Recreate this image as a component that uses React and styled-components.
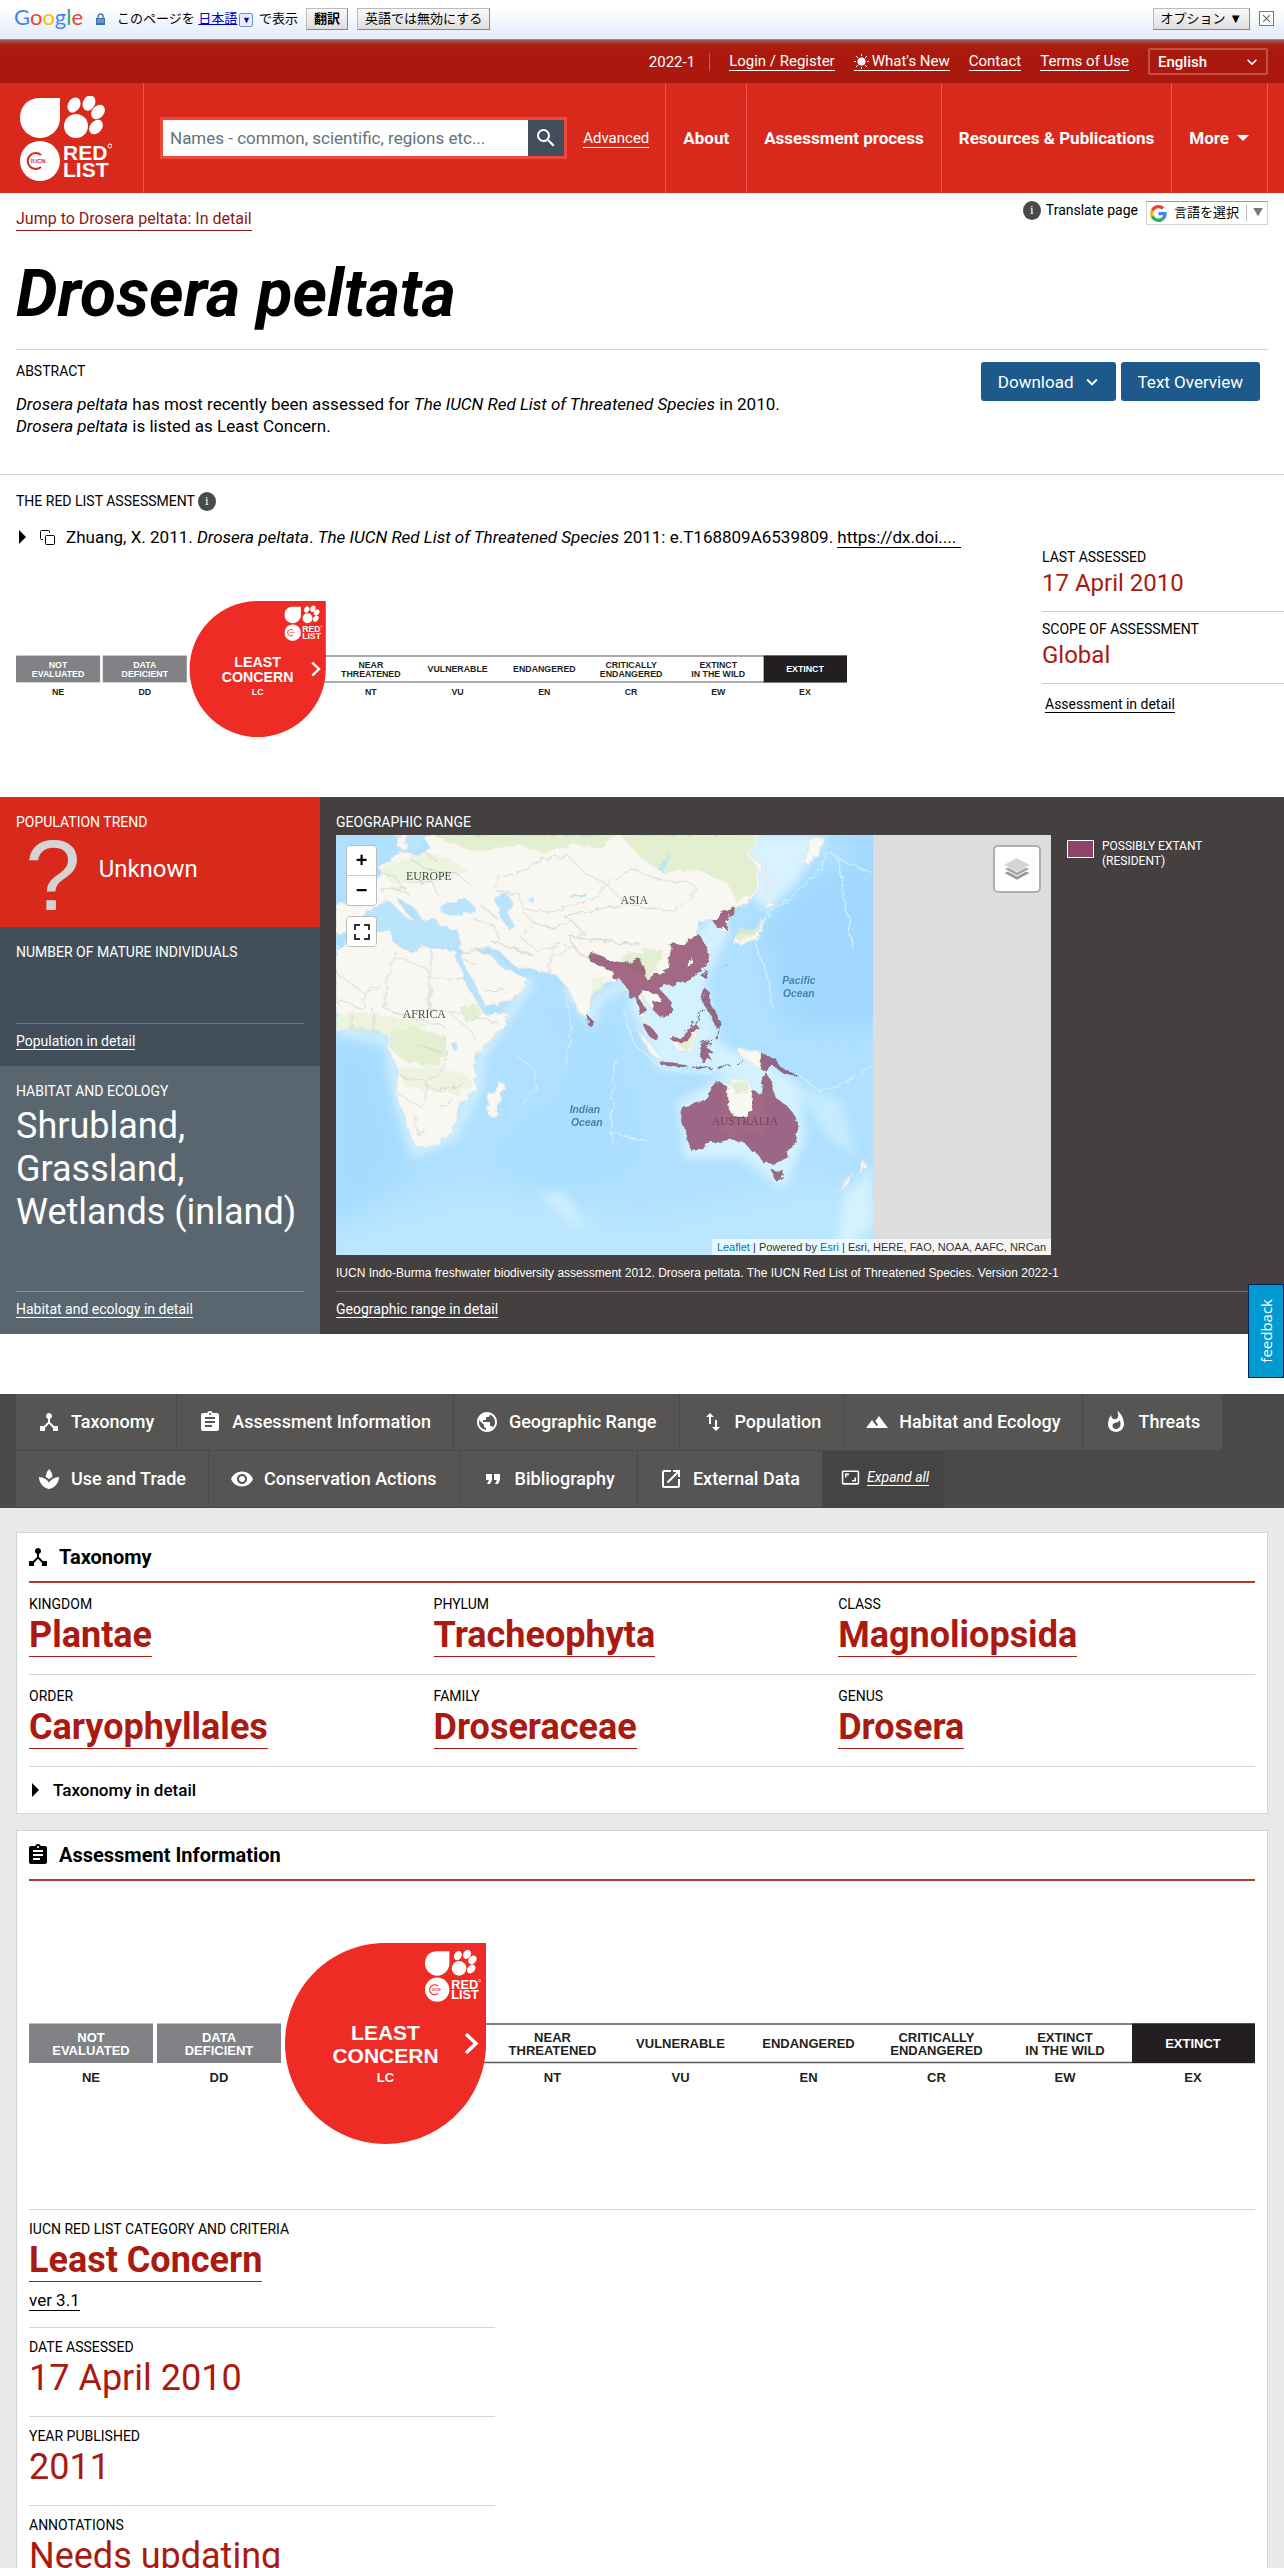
import React, { useState } from "react";
import styled, { createGlobalStyle } from "styled-components";
import {
  MdAspectRatio,
  MdAssignment,
  MdClose,
  MdDeviceHub,
  MdFormatQuote,
  MdKeyboardArrowDown,
  MdLandscape,
  MdLaunch,
  MdPublic,
  MdRemoveRedEye,
  MdSearch,
  MdSpa,
  MdSwapVert,
  MdWhatshot,
} from "react-icons/md";

const tabs = [
  { label: "Taxonomy", icon: MdDeviceHub },
  { label: "Assessment Information", icon: MdAssignment },
  { label: "Geographic Range", icon: MdPublic },
  { label: "Population", icon: MdSwapVert },
  { label: "Habitat and Ecology", icon: MdLandscape },
  { label: "Threats", icon: MdWhatshot },
  { label: "Use and Trade", icon: MdSpa },
  { label: "Conservation Actions", icon: MdRemoveRedEye },
  { label: "Bibliography", icon: MdFormatQuote },
  { label: "External Data", icon: MdLaunch },
];

const taxonomy = [
  ["Kingdom", "Plantae"],
  ["Phylum", "Tracheophyta"],
  ["Class", "Magnoliopsida"],
  ["Order", "Caryophyllales"],
  ["Family", "Droseraceae"],
  ["Genus", "Drosera"],
];

const categories = [
  { code: "NE", lines: ["NOT", "EVALUATED"], x: 124, color: "#fff" },
  { code: "DD", lines: ["DATA", "DEFICIENT"], x: 380, color: "#fff" },
  { code: "NT", lines: ["NEAR", "THREATENED"], x: 1047 },
  { code: "VU", lines: ["VULNERABLE"], x: 1303 },
  { code: "EN", lines: ["ENDANGERED"], x: 1559 },
  { code: "CR", lines: ["CRITICALLY", "ENDANGERED"], x: 1815 },
  { code: "EW", lines: ["EXTINCT", "IN THE WILD"], x: 2072 },
  { code: "EX", lines: ["EXTINCT"], x: 2328, color: "#fff" },
];

const LogoArt = ({ red }) => (
  <>
    <g fill="#fff">
      <path d="M0 22C0 10 8 2 20 2H40V22C40 33 31 42 20 42S0 33 0 22Z" />
      <ellipse cx="56" cy="30" rx="12" ry="12" />
      <ellipse cx="54" cy="9" rx="6" ry="8" transform="rotate(30 54 9)" />
      <ellipse cx="69" cy="7" rx="6" ry="8" transform="rotate(25 69 7)" />
      <ellipse cx="78" cy="16" rx="6" ry="8" transform="rotate(40 78 16)" />
      <ellipse cx="76" cy="31" rx="6" ry="8" transform="rotate(40 76 31)" />
      <circle cx="20" cy="65" r="20" />
      <g fontFamily="Liberation Sans, Arial, sans-serif" fontWeight="700" fontSize="21">
        <text x="43" y="64">RED</text>
        <text x="43" y="81">LIST</text>
      </g>
      <circle cx="90" cy="50" r="2" fill="none" stroke="#fff" />
    </g>
    <path d="M21 59A8 8 0 1 0 21 71" fill="none" stroke={red} strokeWidth="2" />
    <text
      x="11"
      y="67"
      fill={red}
      fontSize="6"
      fontWeight="700"
      fontFamily="Liberation Sans, Arial, sans-serif"
    >
      IUCN
    </text>
  </>
);

const CategoryScale = () => (
  <Scale viewBox="0 0 2452 402" role="img" aria-label="Red List category: Least Concern">
    <rect x="0" y="161" width="248" height="79" fill="#808285" />
    <rect x="256" y="161" width="248" height="79" fill="#808285" />
    <path d="M880 162H2450V239H880Z" fill="#fff" stroke="#58595b" strokeWidth="3" />
    <rect x="2206" y="161" width="246" height="79" fill="#231f20" />
    <path
      d="M512 201C512 90 602 0 713 0H914V201C914 312 824 402 713 402S512 312 512 201Z"
      fill="#ee2b24"
    />
    <path d="M874 182L894 201L874 220" fill="none" stroke="#fff" strokeWidth="7" />
    <svg x="792" y="12" width="112" height="108" viewBox="0 0 92 85">
      <LogoArt red="#ee2b24" />
    </svg>
    <g
      fontFamily="Liberation Sans, Arial, sans-serif"
      fontWeight="700"
      fontSize="26"
      textAnchor="middle"
      fill="#231f20"
    >
      {categories.map(({ code, lines, x, color }) => (
        <g key={code}>
          {lines.map((line, i) => (
            <text key={line} x={x} y={lines.length === 1 ? 210 : 197 + i * 26} fill={color}>
              {line}
            </text>
          ))}
          <text x={x} y="277">{code}</text>
        </g>
      ))}
      <g fill="#fff">
        <text x="713" y="194" fontSize="42">LEAST</text>
        <text x="713" y="239" fontSize="42">CONCERN</text>
        <text x="713" y="278">LC</text>
      </g>
    </g>
  </Scale>
);

const WorldMap = () => (
  <MapArt viewBox="45 154 1503 1176" role="img" aria-label="Range of Drosera peltata">
    <defs>
      <filter id="rough" x="-5%" y="-5%" width="110%" height="110%">
        <feTurbulence type="fractalNoise" baseFrequency="0.04" numOctaves="4" seed="3" />
        <feDisplacementMap in="SourceGraphic" scale="22" />
      </filter>
      <filter id="soft" x="-20%" y="-20%" width="140%" height="140%">
        <feGaussianBlur stdDeviation="14" />
      </filter>
      <filter id="softer" x="-20%" y="-20%" width="140%" height="140%">
        <feGaussianBlur stdDeviation="36" />
      </filter>
    </defs>
    <rect x="45" y="154" width="1503" height="1176" fill="#afe0ff" />
    <g filter="url(#softer)">
      <path d="M20 700L190 780L200 900L260 1060L130 1200L20 1240Z" fill="#a5dbff" />
      <path d="M560 620L700 700L700 900L560 960L480 1100L700 1160L900 1050L800 650Z" fill="#abdeff" />
      <path d="M1230 400L1400 250L1600 200V700L1300 690Z" fill="#a2d8ff" />
      <path d="M0 1260L420 1130L900 1220L1400 1110L1600 1200V1400H0Z" fill="#bae6ff" />
      <path d="M1440 100H1600V400Z" fill="#a4d9ff" />
    </g>
    <g filter="url(#soft)">
      <path d="M1190 154H1420L1330 290L1250 370L1190 300Z" fill="#d8f2ff" />
      <path
        d="M860 620L1100 380L1150 420L1080 560L1120 740L1250 790L1340 850L1360 1000L1300 1150L1180 1060L1020 1060L1000 900L1150 820L950 810Z"
        fill="#d4f1ff"
      />
      <path d="M1440 1330L1470 1160L1548 1080V1250Z" fill="#d4f1ff" />
      <path d="M610 1160L680 1150L750 1260L700 1240Z" fill="#cdeeff" />
      <path d="M1330 850L1460 900L1500 1050L1420 1000Z" fill="#c6ebff" />
    </g>
    <g fill="none" stroke="#d9f2ff" filter="url(#soft)" opacity="0.9">
      <path d="M45 702L190 725L218 880L265 1040L370 1000L440 860L450 770L540 640L590 560" strokeWidth="26" />
      <path d="M690 580L760 670L780 610L860 570" strokeWidth="26" />
    </g>
    <g fill="none" stroke="#cbedff" strokeWidth="4" filter="url(#rough)">
      <path d="M545 770L600 810L605 860L570 905" />
      <path d="M690 600L705 700L685 800" />
      <path d="M1420 190L1400 250L1330 320L1240 390L1220 460L1250 540L1270 640" />
      <path d="M1430 205L1480 235L1548 260M1450 220L1470 340L1490 470" />
      <path d="M850 640L880 740L960 810L1180 830" />
      <path d="M815 1020L825 780M810 990L920 1010" />
      <path d="M1330 820L1400 870L1470 850L1548 800M1400 870L1450 1010" />
    </g>

    <g filter="url(#rough)">
      <g fill="#f8f7f2" stroke="#d5dfe0" strokeWidth="2">
        <path d="M45 475L90 435L150 425L198 420L202 450L240 475L272 480L290 465L380 478L405 560L440 620L462 655L528 655L510 695L470 735L436 775L432 805L438 862L395 905L390 940L365 985L330 1018L290 1032L265 1025L240 960L213 880L218 810L190 755L190 715L150 698L100 695L45 702Z" />
        <path d="M390 485L430 475L480 490L505 520L540 535L585 560L560 598L500 628L462 636L440 605L415 550Z" />
        <path d="M165 240L205 222L225 196L265 210L310 190L285 154H1240L1200 205L1238 240L1230 300L1200 345L1160 358L1140 400L1147 428L1120 420L1100 390L1065 395L1055 430L1090 480L1080 520L1050 550L1000 570L955 578L985 630L955 670L928 640L905 605L905 650L912 680L940 715L945 732L918 708L898 655L890 612L865 605L845 560L805 565L762 600L748 666L722 648L695 585L660 545L590 530L545 522L500 478L470 470L430 475L395 480L385 420L335 410L320 385L290 400L265 360L215 330L240 370L268 395L240 385L190 335L130 370L130 430L45 430V350L110 340L120 290L170 265Z" />
        <path d="M212 154H248L240 192L218 190Z" />
        <path d="M500 850L515 845L505 905L485 948L468 935L470 880Z" />
        <path d="M1245 370L1230 420L1165 440L1152 460L1215 452L1240 420Z" />
        <path d="M1355 230L1372 165L1410 154L1400 210L1368 238Z" />
        <path d="M1248 225L1258 290L1250 320ZM1255 340L1275 350L1250 365Z" />
        <path d="M880 690L930 745L965 790L925 765Z" />
        <path d="M985 735L1040 690L1060 685L1050 740L1035 765L1000 755Z" />
        <path d="M1170 750L1236 762V815L1205 790L1180 775Z" />
        <path d="M1125 850L1150 850L1165 838L1200 842L1215 875L1250 880V990H1120Z" />
        <path d="M1515 1050L1528 1080L1505 1100L1520 1060ZM1500 1100L1480 1130L1448 1155L1470 1125Z" />
      </g>
      <g fill="#deedc6" opacity="0.75">
        <path d="M195 705L260 690L350 720L352 770L330 800L240 790L195 750Z" />
        <path d="M45 655L110 650L180 660L270 670L300 690L190 712L45 698Z" opacity="0.6" />
        <path d="M220 810L300 800L400 820L430 850L380 880L240 860Z" opacity="0.5" />
        <path d="M390 640L440 625L450 655L410 680Z" />
        <path d="M310 154H840L780 190L700 180L620 205L560 180L430 200Z" />
        <path d="M840 154H1235L1195 205L1230 250L1220 310L1170 345L1140 290L1050 250L960 260L900 220Z" />
        <path d="M170 250L290 200L360 220L420 260L330 280L200 290Z" opacity="0.6" />
        <path d="M840 500L920 470L960 480L930 560L850 520Z" />
        <path d="M760 560L800 550L790 590L762 600Z" opacity="0.6" />
        <path d="M1160 430L1230 400L1230 425L1170 450Z" />
        <path d="M1000 740L1045 710L1045 745L1030 760Z" />
        <path d="M1150 850L1200 845L1200 870L1160 880Z" />
      </g>
      <g fill="#b9e4fb">
        <path d="M130 370L190 335L240 385L268 395L265 360L290 400L320 385L335 410L385 420L385 470L290 462L272 478L240 470L202 448L198 418L150 422L100 400Z" />
        <path d="M340 370L350 335L385 345L405 330L440 360L420 375L370 378Z" />
        <path d="M490 330L520 315L540 345L525 370L545 410L530 420L505 385Z" />
        <path d="M378 492L392 490L462 630L470 655L455 650Z" />
        <path d="M478 482L495 480L520 515L545 528L520 535Z" />
        <path d="M945 255L975 215L985 205L965 250ZM580 335L595 322L600 345ZM700 325L745 315V322L705 332Z" />
        <path d="M370 740L388 740L382 758L372 755Z" />
        <path d="M190 225L225 195L265 205L305 154H250L235 195L200 200Z" />
      </g>
      <g fill="none" stroke="#cfcac8" strokeWidth="2">
        <path d="M45 540L130 600L190 555L210 480M210 495L305 530V590L300 640M312 470V558H405M312 558L305 640L390 650" />
        <path d="M130 600L120 640L45 610M190 555L180 640L270 670L350 690M350 715L355 780L330 830L300 850L290 920L215 878M290 850L330 870L400 850M330 920L370 890M270 940V990L300 970M360 650L420 700L440 730" />
        <path d="M490 300L500 270L580 250L620 220L700 215L740 260L800 290L780 330L700 350L640 370L570 360L560 320L490 310" />
        <path d="M800 290L870 250L960 280L1040 290L1060 310L990 370L860 350L800 290M570 370L600 400L660 420M430 390L490 410L500 450M600 400L560 440L610 480L680 460L720 470" />
        <path d="M170 255L210 270L240 310M250 220L300 250L380 260L430 300M640 540L650 490L700 470M400 500L440 520M460 590L520 590" />
        <path d="M250 290L310 280L330 320M290 200L330 230M200 300L250 320M270 740L340 760M225 830L290 840M150 640L150 700M90 645V695M430 660L500 680" />
      </g>
      <g fill="none" stroke="#c6c1ae" strokeWidth="4" opacity="0.5">
        <path d="M655 420L700 390L740 430L700 450L730 490L840 520M680 380L740 370L850 350M700 440L900 460M450 350L500 390M480 450L600 490M170 310L240 300" />
      </g>
    </g>

    <g fontFamily="Liberation Serif, serif" fontSize="33" fill="#4c4c4c" textAnchor="middle">
      <text x="305" y="280">EUROPE</text>
      <text x="880" y="347">ASIA</text>
      <text x="292" y="667">AFRICA</text>
    </g>

    <g fill="#8d4468" fillOpacity="0.8" stroke="#7d6a78" strokeWidth="2" filter="url(#rough)">
      <path d="M752 492L765 484L825 512L850 515L895 500L905 520V545L918 562L945 545L980 530L975 500L985 458L1020 465L1030 445L1062 435L1085 475L1088 500L1065 540L1020 562L990 572L965 572L955 590L985 625V650L958 668L930 640L935 622L955 620L948 600L915 590L898 585L895 610L908 640L898 660L888 610L865 608L862 585L845 560L820 555L822 535L760 510ZM1030 500L1028 525L1040 520L1043 495Z" fillRule="evenodd" />
      <path d="M1100 392L1120 375L1158 355L1155 375L1135 395L1145 425L1130 410L1108 410Z" />
      <path d="M1070 550L1082 532L1080 555ZM1070 610L1078 585L1088 592L1086 618L1100 640L1118 665L1120 685L1105 690L1098 660L1080 640Z" />
      <path d="M750 660L764 675L764 690L752 688Z" />
      <path d="M905 682L922 688L942 712L942 728L925 720Z" />
      <path d="M985 728L1010 718L1035 695L1050 682L1060 695L1035 712L1030 730L995 735Z" />
      <path d="M1062 748L1078 738H1098L1080 748L1098 760L1085 765L1098 785L1082 775L1070 790Z" />
      <path d="M952 790L985 792L1025 797V806L990 802L955 797ZM1040 804L1100 808L1065 810ZM1110 803L1150 800L1120 806Z" />
      <path d="M1236 764L1275 780L1285 800L1320 820L1340 828L1300 822L1270 800L1250 815L1236 810Z" />
      <path d="M1018 915L1060 905L1088 890L1098 860L1125 850L1142 860V910L1150 935L1200 948L1212 910L1214 875L1238 880L1248 820L1262 840L1275 890L1310 915L1335 950V990L1310 1060L1280 1074L1240 1070L1225 1045L1210 1040L1190 1015L1150 1006L1100 1015L1070 1030L1038 1035L1030 1010L1016 950Z" />
      <path d="M1266 1092L1282 1100L1295 1092L1294 1118L1280 1126Z" />
    </g>
    <text
      x="1190"
      y="966"
      fontFamily="Liberation Serif, serif"
      fontSize="33"
      fill="#744561"
      textAnchor="middle"
    >
      AUSTRALIA
    </text>
    <g fill="none" stroke="#6f7f7c" strokeWidth="3" filter="url(#rough)">
      <path d="M1050 680L1075 640M1085 625L1110 650L1090 655M1115 690L1110 725L1070 738M1165 795L1185 785M1125 525L1138 515" />
    </g>
    <g
      fontFamily="Liberation Sans, Arial, sans-serif"
      fontSize="29"
      fontWeight="700"
      fontStyle="italic"
      fill="#4583ab"
      textAnchor="middle"
    >
      <text x="1341" y="571">Pacific</text>
      <text x="1341" y="608">Ocean</text>
      <text x="742" y="932">Indian</text>
      <text x="747" y="969">Ocean</text>
    </g>
  </MapArt>
);

const App = () => {
  const [query, setQuery] = useState("");

  return (
    <Page>
      <GlobalStyle />
      <TranslateBar>
        <GoogleWord>
          <Letter $c="#4285f4">G</Letter>
          <Letter $c="#ea4335">o</Letter>
          <Letter $c="#fbbc05">o</Letter>
          <Letter $c="#4285f4">g</Letter>
          <Letter $c="#34a853">l</Letter>
          <Letter $c="#ea4335">e</Letter>
        </GoogleWord>
        <svg width="9" height="12" viewBox="0 0 9 12" aria-hidden="true">
          <path d="M2 6V3.500A2.500 2.500 0 0 1 7 3.500V6" fill="none" stroke="#4a78b8" strokeWidth="1.500" />
          <path d="M0 5H9V12H0Z" fill="#3c6eb4" />
          <path d="M1 7H8M1 9H8" stroke="#9dbbe4" />
        </svg>
        <BarText>
          このページを <LanguageLink href="#lang">日本語</LanguageLink>
          <LanguageArrow aria-label="言語">▼</LanguageArrow> で表示
        </BarText>
        <BarButton $bold>翻訳</BarButton>
        <BarButton>英語では無効にする</BarButton>
        <Spacer />
        <BarButton>オプション ▼</BarButton>
        <CloseButton aria-label="Close">
          <MdClose size={13} />
        </CloseButton>
      </TranslateBar>

      <TopBar>
        <Version>2022-1</Version>
        <TopLink href="#login">Login / Register</TopLink>
        <TopLink href="#new">
          <svg width="15" height="15" viewBox="0 0 15 15" aria-hidden="true">
            <circle cx="7.500" cy="7.500" r="4" fill="#fff" />
            <path
              d="M7.500 0V2M7.500 13V15M0 7.500H2M13 7.500H15M2 2L4 4M11 11L13 13M2 13L4 11M11 4L13 2"
              stroke="#fff"
            />
          </svg>
          What&apos;s New
        </TopLink>
        <TopLink href="#contact">Contact</TopLink>
        <TopLink href="#terms">Terms of Use</TopLink>
        <SelectWrap>
          <LanguageSelect aria-label="Language" defaultValue="en">
            <option value="en">English</option>
            <option value="fr">Français</option>
            <option value="es">Español</option>
          </LanguageSelect>
          <MdKeyboardArrowDown size={20} />
        </SelectWrap>
      </TopBar>

      <Header>
        <LogoLink href="#home" aria-label="IUCN Red List">
          <svg width="92" height="85" viewBox="0 0 92 85">
            <LogoArt red="#d9291c" />
          </svg>
        </LogoLink>
        <SearchForm onSubmit={(e) => e.preventDefault()}>
          <SearchInput
            aria-label="Search"
            placeholder="Names - common, scientific, regions etc..."
            value={query}
            onChange={(e) => setQuery(e.target.value)}
          />
          <SearchButton aria-label="Search">
            <MdSearch size={24} />
          </SearchButton>
        </SearchForm>
        <Advanced>
          <Link href="#advanced">Advanced</Link>
        </Advanced>
        <Nav>
          <NavLink href="#about">About</NavLink>
          <NavLink href="#process">Assessment process</NavLink>
          <NavLink href="#resources">Resources &amp; Publications</NavLink>
          <NavButton>
            More
            <svg width="12" height="6" viewBox="0 0 12 6" aria-hidden="true">
              <path d="M0 0H12L6 6Z" fill="#fff" />
            </svg>
          </NavButton>
        </Nav>
      </Header>

      <Intro>
        <IntroTop>
          <JumpLink href="#detail">Jump to Drosera peltata: In detail</JumpLink>
          <TranslateBox>
            <Info>i</Info>
            Translate page
            <Translator>
              <svg width="17" height="17" viewBox="0 0 48 48" aria-hidden="true">
                <path fill="#ea4335" d="M24 9.500c3.500 0 6.700 1.200 9.200 3.600l6.900-6.900C35.900 2.400 30.500 0 24 0 14.600 0 6.500 5.400 2.600 13.200l8 6.200C12.400 13.700 17.700 9.500 24 9.500z" />
                <path fill="#4285f4" d="M47 24.500c0-1.600-.2-3.100-.4-4.500H24v9h12.900c-.6 3-2.300 5.500-4.800 7.200l7.700 6C44.400 38 47 32 47 24.500z" />
                <path fill="#fbbc05" d="M10.500 28.600c-.5-1.500-.8-3-.8-4.600s.3-3.100.8-4.600l-8-6.200C1 16.500 0 20.100 0 24s.9 7.500 2.600 10.800l7.900-6.200z" />
                <path fill="#34a853" d="M24 48c6.500 0 11.900-2.100 15.900-5.800l-7.700-6c-2.200 1.500-4.900 2.300-8.200 2.300-6.300 0-11.600-4.200-13.500-9.900l-8 6.200C6.500 42.600 14.600 48 24 48z" />
              </svg>
              <span>言語を選択</span>
              <TranslatorArrow>▼</TranslatorArrow>
            </Translator>
          </TranslateBox>
        </IntroTop>
        <Title>Drosera peltata</Title>
        <Abstract>
          <div>
            <Label>Abstract</Label>
            <Summary>
              <em>Drosera peltata</em> has most recently been assessed for{" "}
              <em>The IUCN Red List of Threatened Species</em> in 2010.
              <br />
              <em>Drosera peltata</em> is listed as Least Concern.
            </Summary>
          </div>
          <Actions>
            <ActionButton>
              Download <MdKeyboardArrowDown size={22} />
            </ActionButton>
            <ActionButton>Text Overview</ActionButton>
          </Actions>
        </Abstract>
      </Intro>

      <Assessment>
        <AssessmentMain>
          <LabelRow>
            <Label>The Red List Assessment</Label>
            <Info>i</Info>
          </LabelRow>
          <Citation>
            <Triangle />
            <svg width="15" height="15" viewBox="0 0 15 15" fill="none" stroke="#000" aria-hidden="true">
              <rect x="5.500" y="5.500" width="9" height="9" rx="1" />
              <path d="M3 9.500H1.500A1 1 0 0 1 .5 8.500V1.500A1 1 0 0 1 1.500 .5H8.500A1 1 0 0 1 9.500 1.500V3" />
            </svg>
            <CitationText>
              Zhuang, X. 2011. <em>Drosera peltata</em>. <em>The IUCN Red List of Threatened Species</em>{" "}
              2011: e.T168809A6539809. <Link href="#doi">https://dx.doi....&nbsp;</Link>
            </CitationText>
          </Citation>
          <SmallScale>
            <CategoryScale />
          </SmallScale>
        </AssessmentMain>
        <Facts>
          <Fact>
            <Label>Last assessed</Label>
            <FactValue>17 April 2010</FactValue>
          </Fact>
          <Fact>
            <Label>Scope of assessment</Label>
            <FactValue>Global</FactValue>
          </Fact>
          <FactLink>
            <Link href="#assessment">Assessment in detail</Link>
          </FactLink>
        </Facts>
      </Assessment>

      <Overview>
        <OverviewSide>
          <Panel $bg="#d9291c" $height={130}>
            <Label>Population trend</Label>
            <Trend>
              <QuestionMark>?</QuestionMark>
              <TrendText>Unknown</TrendText>
            </Trend>
          </Panel>
          <Panel $bg="#424f5a" $height={139}>
            <Label>Number of mature individuals</Label>
            <PanelFoot>
              <Link href="#population">Population in detail</Link>
            </PanelFoot>
          </Panel>
          <Panel $bg="#5a666f" $height={268}>
            <Label>Habitat and ecology</Label>
            <Habitats>Shrubland, Grassland, Wetlands (inland)</Habitats>
            <PanelFoot>
              <Link href="#habitat">Habitat and ecology in detail</Link>
            </PanelFoot>
          </Panel>
        </OverviewSide>
        <Range>
          <Label>Geographic range</Label>
          <RangeBody>
            <MapBox>
              <WorldMap />
              <MapControls>
                <ZoomButtons>
                  <MapButton aria-label="Zoom in">+</MapButton>
                  <MapButton aria-label="Zoom out">−</MapButton>
                </ZoomButtons>
                <ZoomButtons>
                  <MapButton aria-label="Full screen">
                    <svg width="16" height="16" viewBox="0 0 16 16" fill="none" stroke="#333" strokeWidth="2">
                      <path d="M1 6V1H6M10 1H15V6M15 10V15H10M6 15H1V10" />
                    </svg>
                  </MapButton>
                </ZoomButtons>
              </MapControls>
              <LayersButton aria-label="Layers">
                <svg width="28" height="28" viewBox="0 0 28 28" aria-hidden="true">
                  <path d="M1 18L14 25L27 18L14 12Z" fill="#9a9a9a" stroke="#fff" strokeWidth="0.500" />
                  <path d="M1 14L14 21L27 14L14 8Z" fill="#a6a6a6" stroke="#fff" />
                  <path d="M1 10L14 17L27 10L14 3Z" fill="#d4d4d4" stroke="#eee" />
                </svg>
              </LayersButton>
              <Attribution>
                <MapLink href="#leaflet">Leaflet</MapLink> | Powered by <MapLink href="#esri">Esri</MapLink> |
                Esri, HERE, FAO, NOAA, AAFC, NRCan
              </Attribution>
            </MapBox>
            <Legend>
              <Swatch />
              <span>POSSIBLY EXTANT (RESIDENT)</span>
            </Legend>
          </RangeBody>
          <Caption>
            IUCN Indo-Burma freshwater biodiversity assessment 2012. Drosera peltata. The IUCN Red List of
            Threatened Species. Version 2022-1
          </Caption>
          <PanelFoot>
            <Link href="#range">Geographic range in detail</Link>
          </PanelFoot>
        </Range>
      </Overview>

      <TabBar>
        {tabs.map(({ label, icon: Icon }) => (
          <Tab key={label} href={"#" + label}>
            <Icon size={24} />
            {label}
          </Tab>
        ))}
        <ExpandButton>
          <MdAspectRatio size={19} />
          <ExpandText>Expand all</ExpandText>
        </ExpandButton>
      </TabBar>

      <Details>
        <Card>
          <CardTitle>
            <MdDeviceHub size={24} />
            Taxonomy
          </CardTitle>
          <TaxonGrid>
            {taxonomy.map(([rank, name]) => (
              <Taxon key={rank}>
                <Label>{rank}</Label>
                <BigValue $bold>
                  <Link href={"#" + name}>{name}</Link>
                </BigValue>
              </Taxon>
            ))}
          </TaxonGrid>
          <Disclosure>
            <Triangle />
            Taxonomy in detail
          </Disclosure>
        </Card>
        <Card>
          <CardTitle>
            <MdAssignment size={24} />
            Assessment Information
          </CardTitle>
          <LargeScale>
            <CategoryScale />
          </LargeScale>
          <Fields>
            <Field>
              <Label>IUCN Red List Category and Criteria</Label>
              <BigValue $bold>
                <Link href="#lc">Least Concern</Link>
              </BigValue>
              <Criteria>
                <Link href="#criteria">ver 3.1</Link>
              </Criteria>
            </Field>
            <Field>
              <Label>Date assessed</Label>
              <BigValue>17 April 2010</BigValue>
            </Field>
            <Field>
              <Label>Year published</Label>
              <BigValue>2011</BigValue>
            </Field>
            <Field>
              <Label>Annotations</Label>
              <BigValue>Needs updating</BigValue>
            </Field>
          </Fields>
        </Card>
      </Details>

      <Feedback>feedback</Feedback>
    </Page>
  );
};

const GlobalStyle = createGlobalStyle`
  * {
    box-sizing: border-box;
  }
  body {
    margin: 0;
    background: #fff;
    color: #000;
    font-family: Roboto, "Noto Sans CJK JP", sans-serif;
    font-size: 17px;
    line-height: 22px;
  }
  button,
  input,
  select {
    font-family: inherit;
  }
  button {
    cursor: pointer;
  }
  svg {
    flex-shrink: 0;
  }
`;

const Page = styled.div`
  height: 100vh;
  overflow: hidden;
`;

const Spacer = styled.div`
  flex: 1;
`;

const Link = styled.a`
  color: inherit;
  text-decoration: none;
  border-bottom: 1px solid currentColor;
`;

const Label = styled.div`
  font-size: 14px;
  line-height: 18px;
  text-transform: uppercase;
`;

const TranslateBar = styled.div`
  display: flex;
  align-items: center;
  height: 40px;
  padding: 0 10px 2px 14px;
  border-bottom: 1px solid #6b90da;
  background: linear-gradient(#fff 20%, #e0ecfa);
  font-family: "Liberation Sans", "Noto Sans CJK JP", sans-serif;
  font-size: 13px;
  line-height: 18px;
`;

const GoogleWord = styled.span`
  width: 82px;
  padding-bottom: 3px;
  font-family: Lato, sans-serif;
  font-size: 22px;
  line-height: 24px;
`;

const Letter = styled.span`
  color: ${(props) => props.$c};
`;

const BarText = styled.span`
  margin: 0 8px 0 12px;
`;

const LanguageLink = styled.a`
  color: #0000cc;
`;

const LanguageArrow = styled.button`
  width: 14px;
  height: 14px;
  margin: 0 2px;
  padding: 0;
  border: 1px solid #6b90da;
  border-radius: 2px;
  background: #e8f0fc;
  color: #0000cc;
  font-size: 9px;
  line-height: 12px;
`;

const BarButton = styled.button`
  height: 22px;
  margin-right: 9px;
  padding: 0 7px;
  border: 1px solid #bbb;
  border-right-color: #888;
  border-bottom-color: #888;
  background: linear-gradient(#fafafa, #ddd);
  font-size: 13px;
  line-height: 18px;
  font-weight: ${(props) => (props.$bold ? 700 : 400)};
`;

const CloseButton = styled.button`
  display: flex;
  align-items: center;
  justify-content: center;
  width: 15px;
  height: 15px;
  padding: 0;
  border: 1px solid #777;
  background: #fff;
  color: #666;
`;

const TopBar = styled.div`
  display: flex;
  align-items: center;
  justify-content: flex-end;
  gap: 19px;
  height: 43px;
  padding: 0 16px;
  background: linear-gradient(#9d5a55, #a91f14 5px, #ab190e 12px);
  color: #fff;
  font-size: 15px;
  line-height: 18px;
`;

const Version = styled.span`
  padding-right: 14px;
  border-right: 1px solid #c75b53;
`;

const TopLink = styled.a`
  display: flex;
  align-items: center;
  gap: 3px;
  border-bottom: 1px solid #fff;
  color: #fff;
  text-decoration: none;
`;

const SelectWrap = styled.div`
  display: flex;
  align-items: center;
  border: 2px solid #c5504a;
  border-radius: 2px;

  svg {
    margin: 0 4px 0 -24px;
    pointer-events: none;
  }
`;

const LanguageSelect = styled.select`
  width: 116px;
  height: 23px;
  padding: 0 8px;
  border: 0;
  appearance: none;
  background: transparent;
  color: #fff;
  font-size: 15px;
  font-weight: 500;
`;

const Header = styled.header`
  display: flex;
  align-items: center;
  height: 110px;
  padding-right: 16px;
  background: #d9291c;
  color: #fff;
`;

const LogoLink = styled.a`
  display: flex;
  align-items: center;
  height: 100%;
  padding: 0 31px 0 20px;
  border-right: 1px solid #f0534a;
`;

const SearchForm = styled.form`
  display: flex;
  flex: 1;
  height: 42px;
  margin: 0 16px;
  border: 3px solid #f0483b;
`;

const SearchInput = styled.input`
  flex: 1;
  min-width: 0;
  padding: 0 7px;
  border: 0;
  outline: none;
  font-size: 17px;

  &::placeholder {
    color: #66717a;
  }
`;

const SearchButton = styled.button`
  display: flex;
  align-items: center;
  justify-content: center;
  width: 36px;
  padding: 0;
  border: 0;
  background: #424f5a;
  color: #fff;
`;

const Advanced = styled.span`
  margin-right: 16px;
  font-size: 15px;
`;

const Nav = styled.nav`
  display: flex;
  height: 100%;
  border-right: 1px solid #f0534a;
`;

const NavLink = styled.a`
  display: flex;
  align-items: center;
  padding: 0 17px;
  border-left: 1px solid #f0534a;
  color: #fff;
  font-size: 17px;
  font-weight: 700;
  text-decoration: none;
`;

const NavButton = styled.button`
  display: flex;
  align-items: center;
  gap: 8px;
  padding: 0 18px 0 17px;
  border: 0;
  border-left: 1px solid #f0534a;
  background: none;
  color: #fff;
  font-size: 17px;
  font-weight: 700;
`;

const Intro = styled.section`
  padding: 8px 16px 0;
  border-bottom: 1px solid #d4d4d4;
`;

const IntroTop = styled.div`
  display: flex;
  align-items: flex-start;
  justify-content: space-between;
  height: 34px;
`;

const JumpLink = styled(Link)`
  margin-top: 7px;
  color: #8b1a12;
  font-size: 16px;
  line-height: 22px;
`;

const TranslateBox = styled.div`
  display: flex;
  gap: 5px;
  font-size: 14px;
  line-height: 19px;
`;

const Info = styled.span`
  width: 18px;
  height: 19px;
  border-radius: 50%;
  background: #4a4a4a;
  color: #fff;
  font-family: "Liberation Serif", serif;
  font-size: 13px;
  line-height: 18px;
  text-align: center;
`;

const Translator = styled.button`
  display: flex;
  align-items: center;
  gap: 7px;
  height: 24px;
  margin-left: 3px;
  padding: 0 4px 0 3px;
  border: 1px solid #d5d5d5;
  border-top-color: #9b9b9b;
  background: #fff;
  font-size: 13px;
  line-height: 18px;
  white-space: nowrap;
`;

const TranslatorArrow = styled.span`
  padding-left: 6px;
  border-left: 1px solid #bbb;
  color: #767676;
  font-size: 10px;
  line-height: 16px;
`;

const Title = styled.h1`
  margin: 21px 0 17px;
  font-size: 66px;
  font-style: italic;
  font-weight: 700;
  line-height: 76px;
`;

const Abstract = styled.div`
  display: flex;
  justify-content: space-between;
  padding: 12px 8px 37px 0;
  border-top: 1px solid #d4d4d4;
`;

const Summary = styled.p`
  margin: 13px 0 0;
`;

const Actions = styled.div`
  display: flex;
  align-items: flex-start;
  gap: 5px;
`;

const ActionButton = styled.button`
  display: flex;
  align-items: center;
  gap: 7px;
  height: 39px;
  padding: 0 17px;
  border: 0;
  border-radius: 3px;
  background: #1d5a8b;
  color: #fff;
  font-size: 17px;

  svg {
    margin-right: -4px;
  }
`;

const Assessment = styled.section`
  display: grid;
  grid-template-columns: minmax(0, 1fr) 242px;
`;

const AssessmentMain = styled.div`
  padding: 16px 0 60px 16px;
`;

const LabelRow = styled.div`
  display: flex;
  align-items: center;
  gap: 3px;
  height: 20px;
`;

const Citation = styled.div`
  display: flex;
  align-items: center;
  margin-top: 15px;
`;

const Triangle = styled.span`
  width: 0;
  margin: 0 14px 0 3px;
  border: 7px solid transparent;
  border-right-width: 0;
  border-left-color: #000;
`;

const CitationText = styled.span`
  margin-left: 11px;
`;

const Scale = styled.svg`
  display: block;
  width: 100%;
`;

const SmallScale = styled.div`
  width: 81%;
  margin-top: 53px;
`;

const Facts = styled.div`
  padding-top: 73px;
`;

const Fact = styled.div`
  margin-bottom: 8px;
  padding-bottom: 13px;
  border-bottom: 1px solid #ccc;
`;

const FactValue = styled.div`
  margin-top: 3px;
  color: #ab1a10;
  font-size: 24px;
  line-height: 29px;
`;

const FactLink = styled.div`
  padding: 3px;
  font-size: 14px;
  line-height: 18px;
`;

const Overview = styled.section`
  display: grid;
  grid-template-columns: 320px minmax(0, 1fr);
  background: #454040;
  color: #fff;
`;

const OverviewSide = styled.div`
  display: flex;
  flex-direction: column;
`;

const Panel = styled.div`
  display: flex;
  flex-direction: column;
  min-height: ${(props) => props.$height}px;
  padding: 16px;
  background: ${(props) => props.$bg};
`;

const PanelFoot = styled.div`
  margin-top: auto;
  padding-top: 8px;
  border-top: 1px solid rgba(255, 255, 255, 0.25);
  font-size: 14px;
  line-height: 18px;
`;

const Trend = styled.div`
  display: flex;
  align-items: flex-start;
  gap: 18px;
  height: 80px;
  padding-left: 9px;
`;

const QuestionMark = styled.span`
  color: #d4d4d4;
  font-family: "Liberation Sans", Arial, sans-serif;
  font-size: 100px;
  line-height: 88px;
`;

const TrendText = styled.span`
  font-size: 24px;
  line-height: 76px;
`;

const Habitats = styled.div`
  margin-top: 5px;
  font-size: 36px;
  line-height: 43px;
`;

const Range = styled.div`
  display: flex;
  flex-direction: column;
  padding: 16px;
`;

const RangeBody = styled.div`
  display: grid;
  grid-template-columns: minmax(0, 1fr) 201px;
  gap: 16px;
  margin-top: 4px;
`;

const MapBox = styled.div`
  position: relative;
  height: 420px;
  overflow: hidden;
  background: #ddd;
`;

const MapArt = styled.svg`
  display: block;
  height: 100%;
`;

const MapControls = styled.div`
  position: absolute;
  top: 10px;
  left: 10px;
  display: grid;
  gap: 10px;
`;

const ZoomButtons = styled.div`
  display: grid;
  gap: 1px;
  overflow: hidden;
  border: 1px solid #bbb;
  border-radius: 4px;
  background: #ccc;
`;

const MapButton = styled.button`
  display: flex;
  align-items: center;
  justify-content: center;
  width: 29px;
  height: 29px;
  padding: 0;
  border: 0;
  background: #fff;
  color: #000;
  font-family: "Liberation Sans", Arial, sans-serif;
  font-size: 20px;
  font-weight: 700;
`;

const LayersButton = styled.button`
  position: absolute;
  top: 10px;
  right: 10px;
  display: flex;
  align-items: center;
  justify-content: center;
  width: 48px;
  height: 48px;
  padding: 0;
  border: 2px solid #b0b0b0;
  border-radius: 5px;
  background: #fff;
`;

const Attribution = styled.div`
  position: absolute;
  right: 0;
  bottom: 0;
  padding: 0 5px;
  background: rgba(255, 255, 255, 0.7);
  color: #333;
  font-family: "Liberation Sans", Arial, sans-serif;
  font-size: 11px;
  line-height: 16px;
  white-space: nowrap;
`;

const MapLink = styled.a`
  color: #0078a8;
  text-decoration: none;
`;

const Legend = styled.div`
  display: flex;
  gap: 8px;
  padding: 4px 30px 0 0;
  font-size: 12px;
  line-height: 15px;
`;

const Swatch = styled.span`
  flex: none;
  width: 27px;
  height: 18px;
  margin-top: 1px;
  border: 1px solid #fff;
  background: #8d4468;
`;

const Caption = styled.p`
  margin: 9px 0;
  font-family: "Liberation Sans", Arial, sans-serif;
  font-size: 12px;
  line-height: 18px;
`;

const TabBar = styled.nav`
  display: flex;
  flex-wrap: wrap;
  margin-top: 60px;
  padding: 0 16px;
  background: #4b4a48;
  color: #fff;
`;

const Tab = styled.a`
  display: flex;
  align-items: center;
  gap: 10px;
  height: 57px;
  padding: 0 22px 0 21px;
  border-right: 1px solid #4b4a48;
  border-bottom: 1px solid #4b4a48;
  background: #565553;
  color: #fff;
  font-size: 18px;
  font-weight: 500;
  text-decoration: none;
`;

const ExpandButton = styled.button`
  display: flex;
  align-items: center;
  gap: 7px;
  height: 57px;
  padding: 0 15px 4px 18px;
  border: 0;
  background: #454442;
  color: #fff;
  font-size: 14px;
`;

const ExpandText = styled.em`
  border-bottom: 1px solid #fff;
`;

const Details = styled.main`
  display: grid;
  gap: 16px;
  padding: 24px 16px;
  background: #e9e9e9;
`;

const Card = styled.section`
  padding: 0 12px;
  border: 1px solid #d4d4d4;
  background: #fff;
`;

const CardTitle = styled.h2`
  display: flex;
  align-items: center;
  gap: 9px;
  height: 50px;
  margin: 0;
  border-bottom: 2px solid #b23830;
  font-size: 20px;
  font-weight: 700;

  svg {
    margin-left: -3px;
  }
`;

const TaxonGrid = styled.div`
  display: grid;
  grid-template-columns: 33% 33% 34%;
`;

const Taxon = styled.div`
  padding: 12px 0 17px;
  border-bottom: 1px solid #d4d4d4;
`;

const BigValue = styled.div`
  padding-top: 1px;
  color: #ab1a10;
  font-size: 36px;
  font-weight: ${(props) => (props.$bold ? 700 : 400)};
  line-height: 43px;
`;

const Disclosure = styled.button`
  display: flex;
  align-items: center;
  padding: 12px 0;
  border: 0;
  background: none;
  color: #000;
  font-size: 17px;
  font-weight: 500;
  line-height: 22px;
`;

const LargeScale = styled.div`
  padding: 62px 0 65px;
  border-bottom: 1px solid #d4d4d4;
`;

const Fields = styled.div`
  width: 38%;
`;

const Field = styled.div`
  padding: 10px 0 16px;

  & + & {
    border-top: 1px solid #d4d4d4;
  }
`;

const Criteria = styled.div`
  margin-top: 7px;
`;

const Feedback = styled.button`
  position: fixed;
  top: 50%;
  right: 0;
  width: 36px;
  height: 94px;
  padding: 0;
  border: 1px solid #00205b;
  background: #0099d1;
  color: #fff;
  font-family: "Open Sans", sans-serif;
  font-size: 15px;
  writing-mode: sideways-lr;
`;

export default App;
